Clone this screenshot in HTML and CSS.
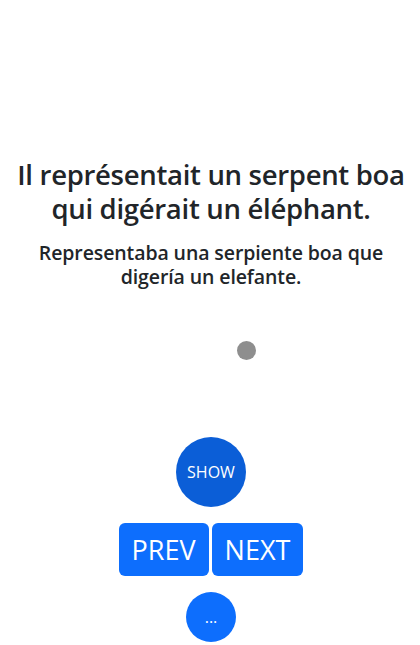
FILE: index.html
```html
<!DOCTYPE html>
<html lang="fr">
<head>
<meta charset="utf-8">
<title>Flashcard</title>
<link rel="stylesheet" href="styles.css">
</head>
<body>
<main class="card">
  <h1 class="phrase">Il représentait un serpent boa qui digérait un éléphant.</h1>
  <h5 class="translation">Representaba una serpiente boa que digería un elefante.</h5>
  <div class="dot-row"><span class="dot"></span></div>
  <button class="btn btn-show">SHOW</button>
  <div class="nav-row">
    <button class="btn btn-nav">PREV</button>
    <button class="btn btn-nav">NEXT</button>
  </div>
  <button class="btn btn-more">...</button>
</main>
</body>
</html>
```
FILE: styles.css
```css
html, body {
  margin: 0;
  padding: 0;
  background: #ffffff;
}
body {
  font-family: "Open Sans", "Noto Sans", sans-serif;
  color: #212529;
}
.card {
  display: flex;
  flex-direction: column;
  align-items: center;
  text-align: center;
  padding: 158px 10px 0 12px;
}
.phrase {
  margin: 0;
  font-size: 27.5px;
  line-height: 34px;
  font-weight: 600;
  letter-spacing: -0.3px;
}
.translation {
  margin: 15px 0 0;
  font-size: 19.5px;
  line-height: 24px;
  font-weight: 600;
  padding: 0 24px;
  letter-spacing: -0.1px;
}
.dot-row {
  display: flex;
  justify-content: center;
  margin-top: 52px;
  width: 100%;
}
.dot {
  width: 19px;
  height: 19px;
  border-radius: 50%;
  background: #8e8e8e;
  margin-left: 71px;
}
.btn {
  border: none;
  color: #ffffff;
  font-family: "Open Sans", "Noto Sans", sans-serif;
  cursor: pointer;
  padding: 0;
}
.btn-show {
  margin-top: 77px;
  width: 70px;
  height: 70px;
  border-radius: 50%;
  background: #0b5ed7;
  font-size: 16px;
}
.nav-row {
  display: flex;
  gap: 3px;
  margin-top: 16px;
}
.btn-nav {
  height: 53px;
  padding: 0 13px;
  border-radius: 6px;
  background: #0d6efd;
  font-size: 27px;
}
.btn-more {
  margin-top: 16px;
  width: 50px;
  height: 50px;
  border-radius: 50%;
  background: #0d6efd;
  font-size: 16px;
}
```
